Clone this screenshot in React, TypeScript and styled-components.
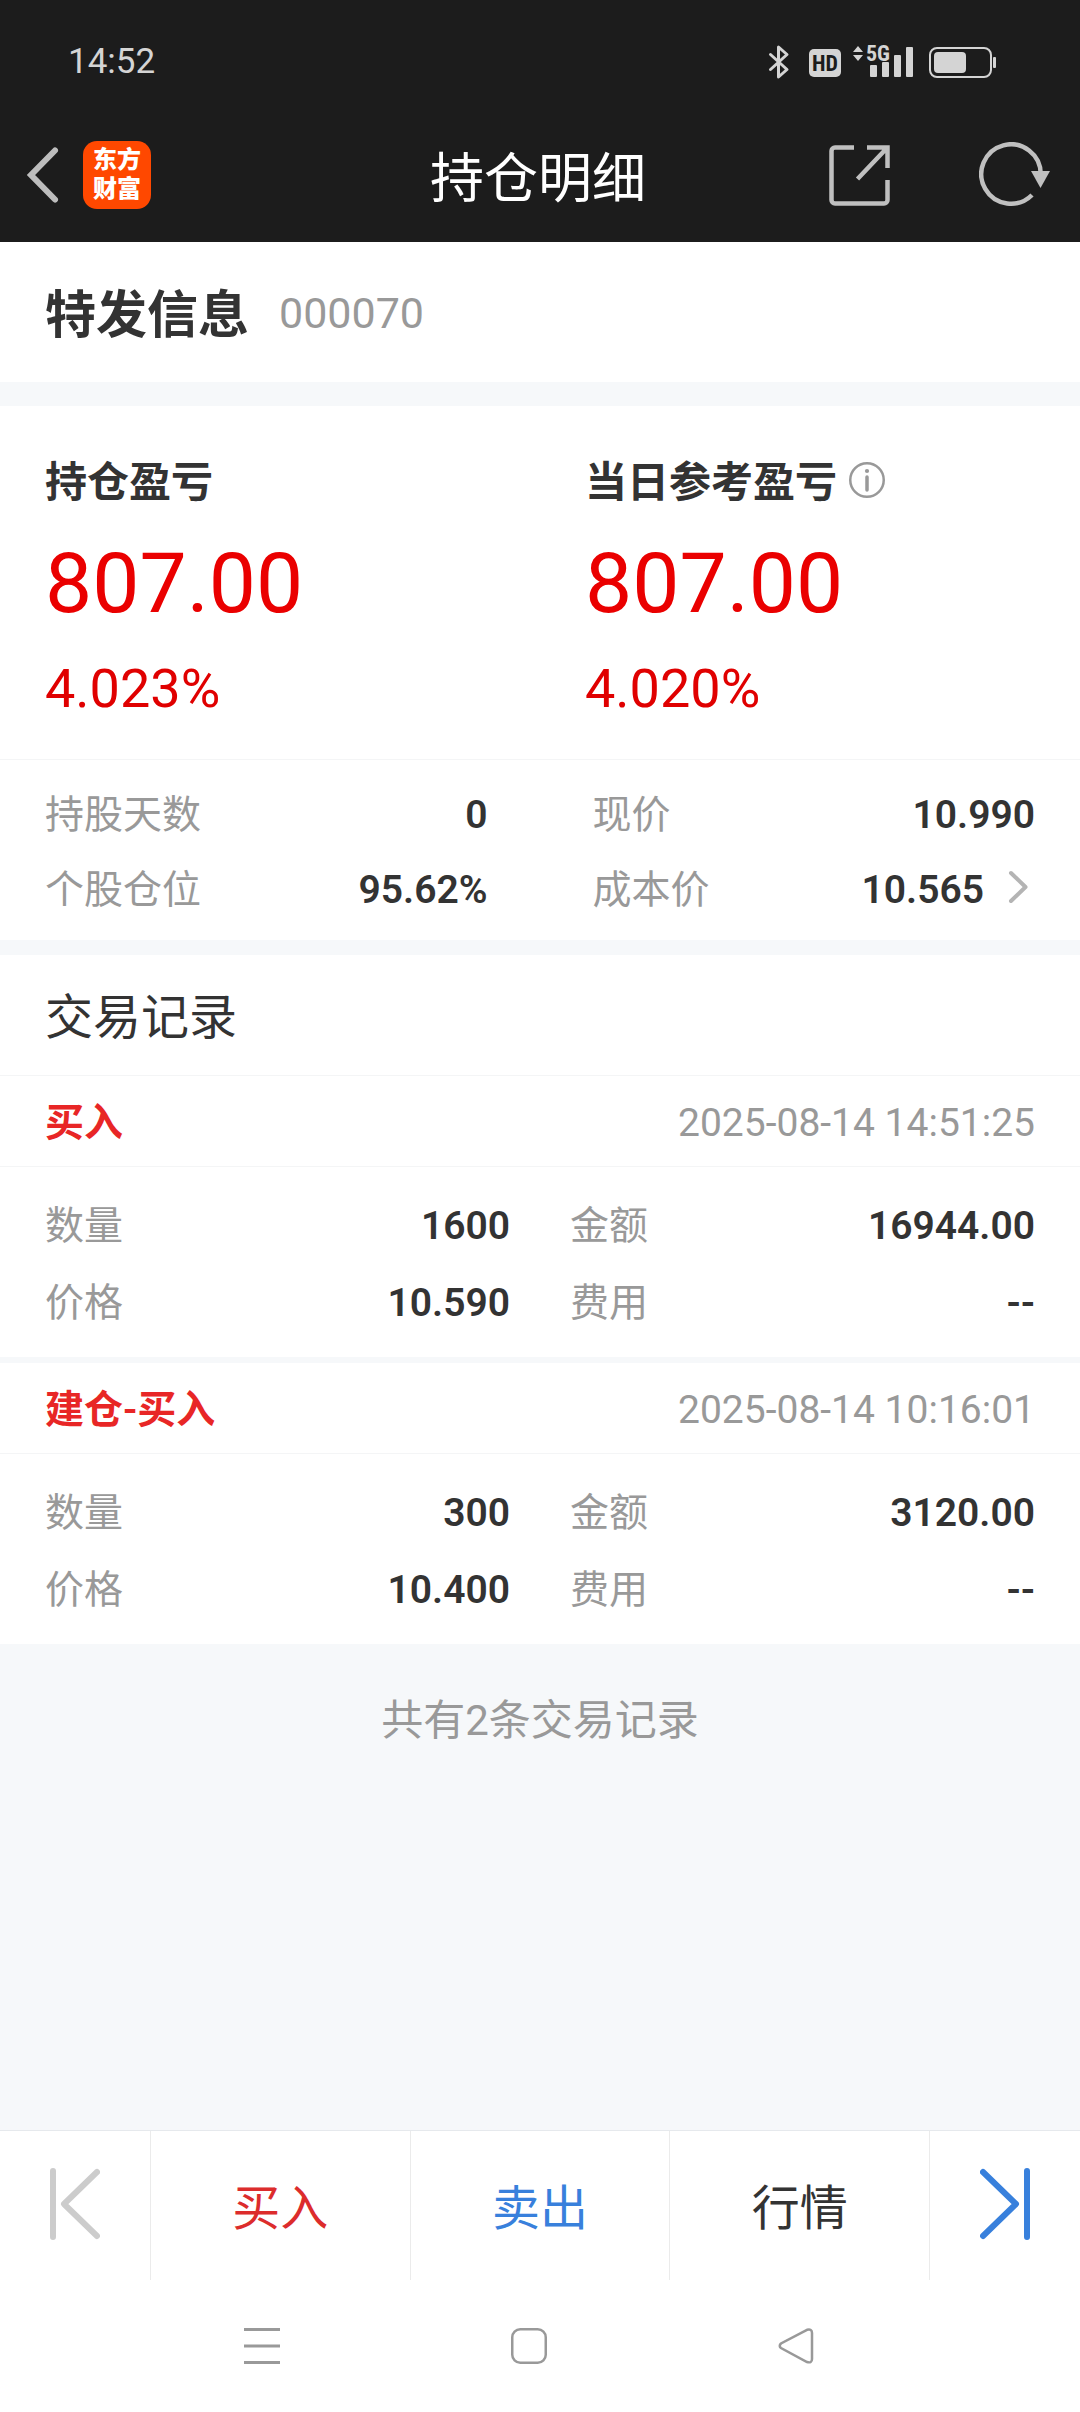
import React from 'react';
import styled, { createGlobalStyle } from 'styled-components';

const GlobalStyle = createGlobalStyle`
  *, *::before, *::after { box-sizing: border-box; }
  body {
    margin: 0;
    background: #f6f8fa;
    color: #333;
    font-family: Roboto, "Noto Sans CJK SC", sans-serif;
  }
  h1, h2, h3, p, dl, dd, dt { margin: 0; font-weight: inherit; }
  button {
    margin: 0;
    padding: 0;
    border: 0;
    background: none;
    color: inherit;
    font: inherit;
    cursor: pointer;
  }
  svg { display: block; flex: none; }
`;

const Screen = styled.div`
  min-height: 100vh;
  display: flex;
  flex-direction: column;
`;

const TopArea = styled.header`
  background: #1c1c1c;
  color: #fff;
`;

const StatusBar = styled.div`
  height: 112px;
  padding: 12px 84px 0 68px;
  display: flex;
  align-items: center;
  justify-content: space-between;
  color: #d4d4d4;
`;

const Clock = styled.time`
  font-size: 35px;
  line-height: 48px;
`;

const StatusIcons = styled.div`
  display: flex;
  align-items: center;
`;

const StatusText = styled.text`
  font-family: "Liberation Sans Narrow", "Roboto Condensed", "DejaVu Sans Condensed", sans-serif;
  font-weight: 700;
`;

const NavBar = styled.div`
  height: 130px;
  padding: 0 28px 4px 24px;
  display: grid;
  grid-template-columns: 1fr auto 1fr;
  align-items: center;
`;

const NavStart = styled.div`
  display: flex;
  align-items: center;
  gap: 23px;
`;

const NavEnd = styled.div`
  display: flex;
  align-items: center;
  justify-content: flex-end;
  gap: 89px;
  color: #c0c0c0;
`;

const BrandLogo = styled.span`
  width: 68px;
  height: 68px;
  border-radius: 14px;
  background: #ff4800;
  color: #fff;
  display: flex;
  flex-direction: column;
  align-items: center;
  justify-content: center;
  font-size: 24px;
  line-height: 29px;
  font-weight: 900;
`;

const Title = styled.h1`
  padding-top: 9px;
  font-size: 54px;
  line-height: 72px;
`;

const Panel = styled.section<{ $gap?: number }>`
  background: #fff;
  margin-bottom: ${(p) => p.$gap ?? 0}px;
`;

const StockHeading = styled.div`
  height: 140px;
  padding: 2px 45px 0;
  display: flex;
  align-items: center;
  gap: 30px;
`;

const StockName = styled.h2`
  padding-top: 6px;
  font-size: 51px;
  line-height: 72px;
  font-weight: 600;
`;

const StockCode = styled.span`
  font-size: 43px;
  line-height: 60px;
  color: #999;
`;

const ProfitGrid = styled.div`
  display: grid;
  grid-template-columns: 1fr 1fr;
  border-bottom: 1px solid #f4f5f6;
`;

const Profit = styled.div`
  padding: 47px 0 37px 45px;
`;

const ProfitLabel = styled.h3`
  display: flex;
  align-items: center;
  gap: 12px;
  font-size: 42px;
  line-height: 60px;
  font-weight: 600;
`;

const ProfitAmount = styled.p`
  margin-top: 11px;
  font-size: 84px;
  line-height: 120px;
  color: #ea0000;
`;

const ProfitRate = styled.p`
  margin-top: 12px;
  font-size: 54px;
  line-height: 66px;
  color: #e00000;
`;

const InfoButton = styled.button`
  padding-bottom: 6px;
  color: #999;
`;

const FieldGrid = styled.dl<{ $columnGap: number; $rowHeight: number; $top: number; $bottom: number }>`
  display: grid;
  grid-template-columns: 1fr 1fr;
  column-gap: ${(p) => p.$columnGap}px;
  grid-auto-rows: ${(p) => p.$rowHeight}px;
  padding: ${(p) => p.$top}px 45px ${(p) => p.$bottom}px;
`;

const Field = styled.div`
  display: flex;
  align-items: center;
  justify-content: space-between;
  font-size: 39px;
  line-height: 54px;
`;

const FieldLabel = styled.dt`
  color: #999;
`;

const FieldValue = styled.dd`
  display: flex;
  align-items: center;
  font-weight: 600;
`;

const CostButton = styled.button`
  padding: 0 7px 6px 24px;
  color: #b4b4b4;
`;

const SectionTitle = styled.h2`
  padding: 27px 45px 21px;
  font-size: 48px;
  line-height: 72px;
`;

const RecordHead = styled.div`
  height: 91px;
  padding: 3px 45px 0;
  display: flex;
  align-items: center;
  justify-content: space-between;
  border-bottom: 1px solid #f4f5f6;
  font-size: 39px;
  line-height: 54px;
`;

const RecordList = styled.div`
  border-top: 1px solid #f4f5f6;
  background: #f6f8fa;
`;

const RecordType = styled.h3`
  color: #e82626;
  font-size: 39px;
  font-weight: 600;
`;

const RecordTime = styled.time`
  color: #999;
`;

const Summary = styled.p`
  padding: 47px 0;
  text-align: center;
  font-size: 42px;
  line-height: 60px;
  color: #999;
`;

const Footer = styled.footer`
  margin-top: auto;
  background: #fff;
`;

const ActionBar = styled.nav`
  height: 150px;
  display: grid;
  grid-template-columns: 151px 1fr 1fr 1fr 150px;
  border-top: 1px solid #e6e9ed;
`;

const ActionButton = styled.button<{ $color: string }>`
  padding-top: 6px;
  display: flex;
  align-items: center;
  justify-content: center;
  color: ${(p) => p.$color};
  font-size: 48px;
  line-height: 72px;

  &:not(:last-child) { border-right: 1px solid #ebebeb; }
`;

const SkipButton = styled(ActionButton)`
  padding: 0 0 4px;
`;

const SystemNav = styled.nav`
  height: 132px;
  padding: 0 266px 0 244px;
  display: flex;
  align-items: center;
  justify-content: space-between;
  color: #999;
`;

const BackIcon = () => (
  <svg width="36" height="60" viewBox="0 0 36 60" fill="none" stroke="#bdbdbd" strokeWidth="6" strokeLinecap="round" strokeLinejoin="miter">
    <path d="M31 5.500L7 30l24 24.500" />
  </svg>
);

const ShareIcon = () => (
  <svg width="61" height="61" viewBox="0 0 61 61" fill="none" stroke="currentColor" strokeWidth="4.500">
    <path d="M25 2.500H6a3.500 3.500 0 0 0-3.500 3.500v49A3.500 3.500 0 0 0 6 58.500h49a3.500 3.500 0 0 0 3.500-3.500V35" />
    <path d="M38 2.500h20.500V23M57 4L28.500 34" />
  </svg>
);

const RefreshIcon = () => (
  <svg width="73" height="66" viewBox="0 0 73 66" fill="none">
    <path d="M53 53A29.700 29.700 0 1 1 61.700 32" stroke="currentColor" strokeWidth="4.500" />
    <path d="M52 29h19L61.500 46z" fill="currentColor" />
  </svg>
);

const StatusGlyphs = () => (
  <svg width="228" height="52" viewBox="0 -8 228 52" fill="none" role="img" aria-label="蓝牙 HD 5G 电池">
    <g stroke="currentColor" strokeWidth="3" strokeLinejoin="round" strokeLinecap="round">
      <path d="M2.500 10.500L19 25.500L10.500 33V3L19 10.500L2.500 25.500" />
    </g>
    <rect x="41" y="5" width="32" height="28" rx="5" fill="currentColor" />
    <StatusText x="57" y="27" fontSize="22" textAnchor="middle" fill="#1c1c1c">HD</StatusText>
    <path d="M85 8L90 2l5 6zM85 11h10L90 17z" fill="currentColor" />
    <StatusText x="98" y="17" fontSize="22" fill="currentColor">5G</StatusText>
    <g fill="currentColor">
      <rect x="102" y="21" width="7" height="12" rx="1" />
      <rect x="114" y="18" width="7" height="15" rx="1" />
      <rect x="126" y="11" width="7" height="22" rx="1" />
      <rect x="138" y="3" width="7" height="30" rx="1" />
    </g>
    <rect x="162" y="4" width="61" height="29" rx="7" stroke="currentColor" strokeWidth="2" />
    <rect x="166" y="8" width="32" height="21" rx="4" fill="currentColor" />
    <rect x="225" y="13" width="3" height="11" rx="1" fill="currentColor" />
  </svg>
);

const InfoIcon = () => (
  <svg width="36" height="36" viewBox="0 0 36 36" fill="none" stroke="currentColor">
    <circle cx="18" cy="18" r="16.750" strokeWidth="2.500" />
    <circle cx="18" cy="9" r="2.100" fill="currentColor" stroke="none" />
    <path d="M18 15v13" strokeWidth="3.500" strokeLinecap="round" />
  </svg>
);

const ChevronIcon = () => (
  <svg width="20" height="34" viewBox="0 0 20 34" fill="none" stroke="currentColor" strokeWidth="4" strokeLinecap="round" strokeLinejoin="round">
    <path d="M3 3L17.500 17L3 31" />
  </svg>
);

const SkipIcon = ({ forward = false }: { forward?: boolean }) => (
  <svg width="50" height="72" viewBox="0 0 50 72" fill="none" stroke="currentColor" strokeWidth="6" strokeLinecap="round" strokeLinejoin="round">
    <path d={forward ? 'M3 4l33 32L3 68M47 3v66' : 'M47 4L14 36l33 32M3 3v66'} />
  </svg>
);

type FieldData = { label: string; value: string; link?: boolean };

type FieldsProps = { items: FieldData[]; columnGap: number; rowHeight: number; top: number; bottom: number };

const Fields = ({ items, columnGap, rowHeight, top, bottom }: FieldsProps) => (
  <FieldGrid $columnGap={columnGap} $rowHeight={rowHeight} $top={top} $bottom={bottom}>
    {items.map((item) => (
      <Field key={item.label}>
        <FieldLabel>{item.label}</FieldLabel>
        <FieldValue>
          {item.value}
          {item.link && (
            <CostButton type="button" aria-label="成本价详情">
              <ChevronIcon />
            </CostButton>
          )}
        </FieldValue>
      </Field>
    ))}
  </FieldGrid>
);

const position: FieldData[] = [
  { label: '持股天数', value: '0' },
  { label: '现价', value: '10.990' },
  { label: '个股仓位', value: '95.62%' },
  { label: '成本价', value: '10.565', link: true },
];

const records = [
  {
    type: '买入',
    time: '2025-08-14 14:51:25',
    fields: [
      { label: '数量', value: '1600' },
      { label: '金额', value: '16944.00' },
      { label: '价格', value: '10.590' },
      { label: '费用', value: '--' },
    ],
  },
  {
    type: '建仓-买入',
    time: '2025-08-14 10:16:01',
    fields: [
      { label: '数量', value: '300' },
      { label: '金额', value: '3120.00' },
      { label: '价格', value: '10.400' },
      { label: '费用', value: '--' },
    ],
  },
];

export default function App() {
  return (
    <Screen>
      <GlobalStyle />
      <TopArea>
        <StatusBar>
          <Clock>14:52</Clock>
          <StatusIcons>
            <StatusGlyphs />
          </StatusIcons>
        </StatusBar>
        <NavBar>
          <NavStart>
            <button type="button" aria-label="返回">
              <BackIcon />
            </button>
            <BrandLogo>
              <span>东方</span>
              <span>财富</span>
            </BrandLogo>
          </NavStart>
          <Title>持仓明细</Title>
          <NavEnd>
            <button type="button" aria-label="分享">
              <ShareIcon />
            </button>
            <button type="button" aria-label="刷新">
              <RefreshIcon />
            </button>
          </NavEnd>
        </NavBar>
      </TopArea>

      <main>
        <Panel $gap={24}>
          <StockHeading>
            <StockName>特发信息</StockName>
            <StockCode>000070</StockCode>
          </StockHeading>
        </Panel>

        <Panel $gap={15}>
          <ProfitGrid>
            <Profit>
              <ProfitLabel>持仓盈亏</ProfitLabel>
              <ProfitAmount>807.00</ProfitAmount>
              <ProfitRate>4.023%</ProfitRate>
            </Profit>
            <Profit>
              <ProfitLabel>
                当日参考盈亏
                <InfoButton type="button" aria-label="当日参考盈亏说明">
                  <InfoIcon />
                </InfoButton>
              </ProfitLabel>
              <ProfitAmount>807.00</ProfitAmount>
              <ProfitRate>4.020%</ProfitRate>
            </Profit>
          </ProfitGrid>
          <Fields items={position} columnGap={105} rowHeight={75} top={17} bottom={13} />
        </Panel>

        <Panel>
          <SectionTitle>交易记录</SectionTitle>
          <RecordList>
            {records.map((record, index) => (
              <Panel key={record.time} $gap={index < records.length - 1 ? 6 : 0}>
                <RecordHead>
                  <RecordType>{record.type}</RecordType>
                  <RecordTime>{record.time}</RecordTime>
                </RecordHead>
                <Fields items={record.fields} columnGap={60} rowHeight={77} top={20} bottom={16} />
              </Panel>
            ))}
          </RecordList>
        </Panel>

        <Summary>共有2条交易记录</Summary>
      </main>

      <Footer>
        <ActionBar>
          <SkipButton type="button" aria-label="上一个" $color="#ccc">
            <SkipIcon />
          </SkipButton>
          <ActionButton type="button" $color="#dc2c2c">买入</ActionButton>
          <ActionButton type="button" $color="#3880dc">卖出</ActionButton>
          <ActionButton type="button" $color="#333">行情</ActionButton>
          <SkipButton type="button" aria-label="下一个" $color="#3880dc">
            <SkipIcon forward />
          </SkipButton>
        </ActionBar>
        <SystemNav>
          <button type="button" aria-label="菜单">
            <svg width="36" height="36" viewBox="0 0 36 36" fill="none" stroke="currentColor" strokeWidth="3">
              <path d="M0 1.500h36M0 18h36M0 34.500h36" />
            </svg>
          </button>
          <button type="button" aria-label="主屏幕">
            <svg width="36" height="36" viewBox="0 0 36 36" fill="none" stroke="currentColor" strokeWidth="2.500">
              <rect x="1.250" y="1.250" width="33.500" height="33.500" rx="8" />
            </svg>
          </button>
          <button type="button" aria-label="后退">
            <svg width="36" height="36" viewBox="0 0 36 36" fill="none" stroke="currentColor" strokeWidth="2.500">
              <path d="M29 1.800L3 15.500Q.5 18 3 20L29 34Q34 35.500 34 31V5Q34 .5 29 1.800z" />
            </svg>
          </button>
        </SystemNav>
      </Footer>
    </Screen>
  );
}
